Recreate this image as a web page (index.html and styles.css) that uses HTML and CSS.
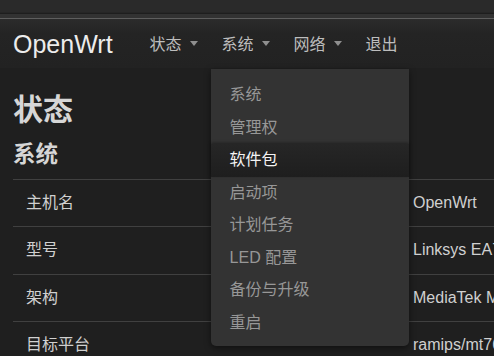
FILE: index.html
```html
<!DOCTYPE html>
<html lang="zh-CN">
<head>
    <meta charset="UTF-8">
    <meta name="viewport" content="width=device-width, initial-scale=1.0">
    <title>OpenWrt - 状态</title>
    <link rel="stylesheet" href="styles.css">
</head>
<body>

    <div class="topstrip"></div>
    <header class="navbar">
        <a class="brand" href="#">OpenWrt</a>
        <ul class="nav">
            <li class="nav-item"><a href="#">状态<span class="caret"></span></a></li>
            <li class="nav-item open">
                <a href="#">系统<span class="caret"></span></a>
                <ul class="dropdown">
                    <li><a href="#">系统</a></li>
                    <li><a href="#">管理权</a></li>
                    <li class="active"><a href="#">软件包</a></li>
                    <li><a href="#">启动项</a></li>
                    <li><a href="#">计划任务</a></li>
                    <li><a href="#">LED 配置</a></li>
                    <li><a href="#">备份与升级</a></li>
                    <li><a href="#">重启</a></li>
                </ul>
            </li>
            <li class="nav-item"><a href="#">网络<span class="caret"></span></a></li>
            <li class="nav-item"><a href="#">退出</a></li>
        </ul>
    </header>

    <main class="content">
        <h2>状态</h2>
        <h3>系统</h3>
        <div class="info-wrap">
            <table class="info">
                <tr><td class="label">主机名</td><td>OpenWrt</td></tr>
                <tr><td class="label">型号</td><td>Linksys EA7500 v2</td></tr>
                <tr><td class="label">架构</td><td>MediaTek MT7621 ver:1 eco:3</td></tr>
                <tr><td class="label">目标平台</td><td>ramips/mt7621</td></tr>
            </table>
        </div>
    </main>

</body>
</html>
```

FILE: styles.css
```css
body {
    margin: 0;
    background-color: #1f1f1f;
    font-family: "Liberation Sans", "Noto Sans CJK SC", sans-serif;
    color: #ccc;
    overflow: hidden;
}
a {
    text-decoration: none;
    color: inherit;
}
.topstrip {
    height: 13px;
    background-color: #2a2a2a;
    border-bottom: 1px solid #1e1e1e;
    box-shadow: inset 0 -1px 0 #262626;
}
.navbar {
    height: 50px;
    display: flex;
    align-items: center;
    padding-left: 13px;
    background: linear-gradient(#2c2c2c, #242424 30%, #222222);
    border-top: 4px solid #323232;
    box-shadow: inset 0 1px 0 #5e5e5e;
}
.brand {
    font-size: 25px;
    color: #ececec;
    margin-right: 26px;
    padding-top: 2px;
}
.nav {
    display: flex;
    list-style: none;
    margin: 0;
    padding: 0;
    height: 100%;
}
.nav-item {
    position: relative;
    width: 72px;
    display: flex;
    align-items: center;
}
.nav-item > a {
    display: flex;
    align-items: center;
    padding-left: 11px;
    font-size: 16px;
    color: #bdbdbd;
}
.caret {
    width: 0;
    height: 0;
    margin-left: 8px;
    border-left: 4.5px solid transparent;
    border-right: 4.5px solid transparent;
    border-top: 5px solid #8f8f8f;
}
.dropdown {
    position: absolute;
    top: 51px;
    left: 0;
    width: 198px;
    margin: 0;
    padding: 10px 0 7px;
    list-style: none;
    background-color: #333333;
    border-radius: 0 0 5px 5px;
    box-shadow: 0 2px 6px rgba(0, 0, 0, 0.5);
    z-index: 10;
}
.dropdown li a {
    display: block;
    height: 32.5px;
    line-height: 32px;
    padding-left: 19px;
    font-size: 16px;
    color: #979797;
}
.dropdown li.active a {
    color: #f4f4f4;
    background: linear-gradient(#262626, #1e1e1e);
    box-shadow: 0 -1px 3px rgba(0, 0, 0, 0.4);
}
.content {
    padding-left: 13px;
}
.content h2 {
    margin: 24px 0 0;
    font-size: 30px;
    line-height: 36px;
    color: #d6d6d6;
}
.content h3 {
    margin: 13px 0 0;
    font-size: 22.5px;
    line-height: 28px;
    color: #d6d6d6;
}
.info-wrap {
    margin-top: 10px;
    overflow: hidden;
}
.info {
    width: 800px;
    border-collapse: collapse;
}
.info td {
    height: 47.3px;
    box-sizing: border-box;
    border-top: 1px solid #404040;
    font-size: 16px;
    line-height: 20px;
    color: #d0d0d0;
    padding: 0;
    white-space: nowrap;
}
.info td.label {
    width: 387px;
    padding-left: 13px;
}
.info td:last-child {
    padding-left: 13px;
}
```
